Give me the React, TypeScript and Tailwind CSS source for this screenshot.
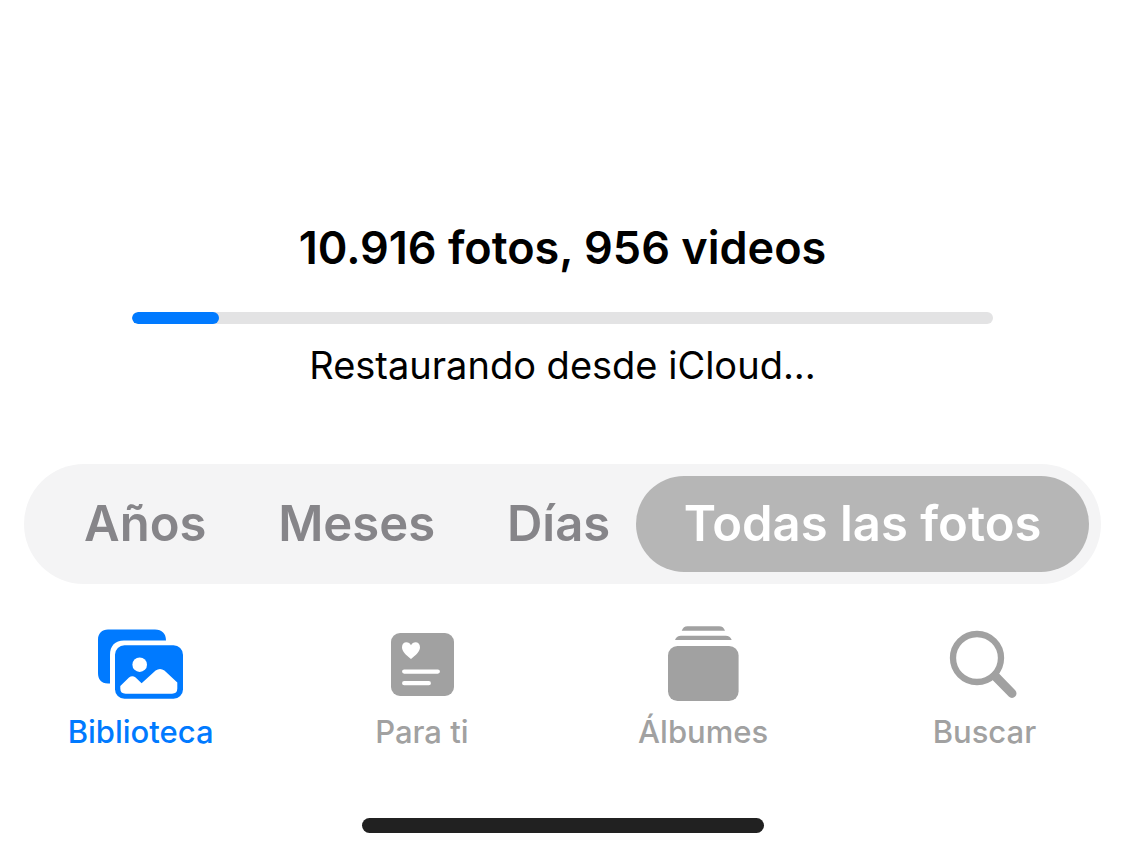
import { useState, type ReactNode } from "react";

function LibraryIcon() {
    return <svg viewBox="0 0 96 80" className="w-24 h-20" aria-hidden="true">
        <path fill="currentColor" d="M15 5.6H62C69 5.6 73 9.6 73 16.6H31C22 16.6 17 22 17 31V59.5H15C8 59.5 5 55 5 49V15.6C5 9.6 9 5.6 15 5.6Z" />
        <rect x="22" y="21.3" width="68" height="53.4" rx="9.5" fill="currentColor" />
        <circle cx="46.7" cy="40.7" r="7.3" fill="white" />
        <path fill="white" d="M27.3 62L36 53.6Q39.3 50.8 42.6 53.6L48.6 59.2L62.6 46.6Q67 43.2 71.4 46.6L84.3 58.4V64.5Q84.3 69.7 79 69.7H32.6Q27.3 69.7 27.3 64.5Z" />
    </svg>
}

function ForYouIcon() {
    return <svg viewBox="0 0 96 80" className="w-24 h-20" aria-hidden="true">
        <rect x="17" y="9" width="63" height="63" rx="9" fill="currentColor" />
        <path fill="white" d="M37 35C32 31 28 27.5 28 23.2C28 20.2 30 18.3 32.4 18.3C34.4 18.3 36.1 19.4 37 21.2C37.9 19.4 39.6 18.3 41.6 18.3C44 18.3 46 20.2 46 23.2C46 27.5 42 31 37 35Z" />
        <path stroke="white" strokeWidth="4.3" strokeLinecap="round" d="M30.2 47.6H63.8M30.2 59.2H54.8" />
    </svg>
}

function AlbumsIcon() {
    return <svg viewBox="0 0 96 80" className="w-24 h-20" aria-hidden="true">
        <path fill="currentColor" d="M26.7 6.7C28 3.6 29.5 2.3 32.5 2.3H64.2C67.2 2.3 68.7 3.6 70 6.7Z" />
        <path fill="currentColor" d="M20 16C21.3 13 23 11.7 26 11.7H70.7C73.7 11.7 75.4 13 76.7 16Z" />
        <rect x="13" y="22" width="70.6" height="55" rx="9.5" fill="currentColor" />
    </svg>
}

function SearchIcon() {
    return <svg viewBox="0 0 96 80" className="w-24 h-20" fill="none" stroke="currentColor" aria-hidden="true">
        <circle cx="41" cy="34" r="24" strokeWidth="6.3" />
        <path d="M60 53L76 69.4" strokeWidth="9" strokeLinecap="round" />
        <path d="M56 49L62 55" strokeWidth="8" />
    </svg>
}

const periods = ["Años", "Meses", "Días"];

const tabs: { label: string, icon: ReactNode }[] = [
    { label: "Biblioteca", icon: <LibraryIcon /> },
    { label: "Para ti", icon: <ForYouIcon /> },
    { label: "Álbumes", icon: <AlbumsIcon /> },
    { label: "Buscar", icon: <SearchIcon /> },
];

export default function App() {
    const [period, setPeriod] = useState("Todas las fotos");
    const [tab, setTab] = useState("Biblioteca");
    const progress = 10.1;

    function periodColor(name: string) {
        return period === name ? "bg-[#b6b6b6] text-white" : "text-[#868589]";
    }

    return <div className="min-h-screen bg-white text-black font-['Inter',sans-serif] flex flex-col justify-end">
        <main className="flex flex-col items-center pt-[220px]">
            <h1 className="text-[45px] leading-14 font-semibold">10.916 fotos, 956 videos</h1>
            <div className="self-stretch px-[132px] pt-9 pb-4">
                <div role="progressbar" aria-label="Restaurando desde iCloud" aria-valuenow={progress} className="h-3 rounded-full bg-[#e3e3e4] overflow-hidden">
                    <div className="h-3 rounded-full bg-[#007aff]" style={{ width: `${progress}%` }} />
                </div>
            </div>
            <p className="text-[38px] leading-[50px]">Restaurando desde iCloud...</p>
        </main>

        <div className="mx-6 mt-[74px] p-3 flex rounded-[60px] bg-[#f4f4f5] text-[49px] leading-[96px] font-semibold">
            <div className="flex-1 flex justify-between pl-12 pr-[26px]">
                {periods.map((name) => (
                    <button key={name} onClick={() => setPeriod(name)} className={`rounded-full cursor-pointer ${periodColor(name)}`}>{name}</button>
                ))}
            </div>
            <button onClick={() => setPeriod("Todas las fotos")} className={`w-[43%] rounded-full whitespace-nowrap cursor-pointer ${periodColor("Todas las fotos")}`}>Todas las fotos</button>
        </div>

        <nav className="mt-10 grid grid-cols-4">
            {tabs.map(({ label, icon }) => (
                <button key={label} onClick={() => setTab(label)} className={`flex flex-col items-center gap-2 cursor-pointer ${tab === label ? "text-[#007aff]" : "text-[#a1a1a1]"}`}>
                    {icon}
                    <span className="text-[31px] leading-10 font-medium">{label}</span>
                </button>
            ))}
        </nav>

        <div className="mt-[66px] mb-6 h-[15px] w-[402px] self-center rounded-full bg-[#212121]" />
    </div>
}
